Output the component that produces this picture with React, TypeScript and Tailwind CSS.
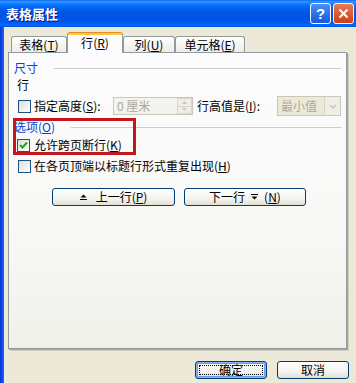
const FONT = "font-['Noto_Sans_CJK_SC','Noto_Sans',sans-serif]";

const Mn = ({ k }: { k: string }) => (
  <span>
    (<u className="underline-offset-1">{k}</u>)
  </span>
);

const CheckBox = ({ checked = false }: { checked?: boolean }) => (
  <span className="w-[13px] h-[13px] shrink-0 border border-[#1c5180] bg-[linear-gradient(135deg,#dcdcd7,#ffffff)] flex items-center justify-center">
    {checked && (
      <svg width="9" height="8" viewBox="0 0 9 8">
        <path d="M1 4 L3.5 6.5 L8 1.5" stroke="#21a121" strokeWidth="2" fill="none" />
      </svg>
    )}
  </span>
);

const GroupLabel = ({ text, k }: { text: string; k?: string }) => (
  <div className="flex items-center h-[14px] pl-[5px] pr-[5px]">
    <span className="text-[#0046d5] leading-[14px]">
      {text}
      {k && <Mn k={k} />}
    </span>
    <div className="flex-1 ml-[16px] h-px bg-[#d0d0bf]" />
  </div>
);

const Tab = ({ label, k, w, selected = false }: { label: string; k: string; w: string; selected?: boolean }) =>
  selected ? (
    <div className={`${w} h-[21px] relative z-10 flex flex-col border-x border-t border-[#919b9c] border-t-[#e68b2c] rounded-t-[3px] bg-[#fcfcfe]`}>
      <div className="h-[2px] bg-[#ffc73c]" />
      <div className="flex-1 flex items-center justify-center leading-[14px] pb-[2px]">
        {label}
        <Mn k={k} />
      </div>
    </div>
  ) : (
    <div className={`${w} h-[17px] flex items-center justify-center border-x border-t border-[#919b9c] rounded-t-[3px] bg-[linear-gradient(180deg,#ffffff,#ecebe6)] leading-[14px] pb-[1px]`}>
      {label}
      <Mn k={k} />
    </div>
  );

const XpButton = ({ children, w, focused = false }: { children: React.ReactNode; w: string; focused?: boolean }) => (
  <div
    className={`${w} h-[18px] rounded-[3px] border border-[#003c74] bg-[linear-gradient(180deg,#ffffff_0%,#f4f3ee_60%,#e3e1d6_100%)] flex items-center justify-center ${
      focused ? 'shadow-[inset_0_0_0_1px_#8cb4f2,inset_0_0_0_2px_#6b9ae8]' : ''
    }`}
  >
    {focused ? (
      <div className="w-[calc(100%-6px)] h-[calc(100%-6px)] border border-dotted border-black flex items-center justify-center leading-[12px]">
        {children}
      </div>
    ) : (
      <div className="flex items-center justify-center leading-[14px]">{children}</div>
    )}
  </div>
);

export default function App() {
  return (
    <div className={`w-[356px] h-[383px] bg-[#ece9d8] flex flex-col overflow-hidden text-[12px] text-black ${FONT}`}>
      {/* title bar */}
      <div className="h-[27px] shrink-0 flex items-center pl-[6px] pr-[2px] bg-[linear-gradient(180deg,#0058ee_0%,#3593ff_4%,#288eff_8%,#127dff_14%,#036ffc_20%,#0262ee_30%,#0057e5_45%,#0054e3_60%,#0055eb_75%,#005bf5_85%,#026afe_92%,#0062ef_96%,#0052d6_100%)]">
        <span className="flex-1 text-white font-bold text-[13px] leading-[16px] [text-shadow:1px_1px_#0a1883]">表格属性</span>
        <div className="flex gap-[2px]">
          <div className="w-[21px] h-[21px] rounded-[3px] border border-white bg-[linear-gradient(180deg,#4a8ff5,#1659db)] flex items-center justify-center text-white font-bold text-[15px] leading-none font-['Liberation_Sans',sans-serif]">
            ?
          </div>
          <div className="w-[21px] h-[21px] rounded-[3px] border border-white bg-[linear-gradient(180deg,#e77a5a,#cc3d17)] flex items-center justify-center">
            <svg width="11" height="11" viewBox="0 0 11 11">
              <path d="M1.5 1.5 L9.5 9.5 M9.5 1.5 L1.5 9.5" stroke="white" strokeWidth="2" />
            </svg>
          </div>
        </div>
      </div>

      <div className="flex-1 flex">
        <div className="w-[4px] shrink-0 bg-[linear-gradient(90deg,#0831d9,#0a4be3,#2a64ec)]" />
        <div className="flex-1 flex flex-col">
          {/* tabs */}
          <div className="mt-[6px] h-[20px] flex items-end pl-[7px]">
            <Tab label="表格" k="T" w="w-[56px]" />
            <Tab label="行" k="R" w="w-[56px]" selected />
            <Tab label="列" k="U" w="w-[52px]" />
            <Tab label="单元格" k="E" w="w-[70px]" />
          </div>

          {/* panel */}
          <div className="relative -mt-px ml-[4px] w-[339px] h-[297px] border border-[#919b9c] bg-[linear-gradient(180deg,#fcfcfe_0%,#f8f8f6_60%,#f1f0ea_100%)] shadow-[1px_1px_0_#aca899,2px_2px_0_#d0cdbf] flex flex-col">
            <div className="pt-[8px]">
              <GroupLabel text="尺寸" />
            </div>
            <div className="mt-[3px] h-[14px] pl-[8px] flex items-center leading-[14px]">行</div>

            <div className="mt-[4px] h-[20px] pl-[9px] flex items-center">
              <CheckBox />
              <span className="w-[82px] pl-[3px] leading-[14px]">
                指定高度<Mn k="S" />:
              </span>
              <div className="w-[80px] h-[18px] border border-[#c9c7ba] bg-[#f4f3ee] flex items-center">
                <span className="flex-1 pl-[3px] text-[#aca899] leading-[14px]">0 厘米</span>
                <div className="w-[15px] h-[16px] flex flex-col">
                  <div className="flex-1 bg-[#f0efe6] border border-[#d8d6c8] flex items-center justify-center">
                    <svg width="5" height="3" viewBox="0 0 5 3"><path d="M0 3 L2.5 0 L5 3Z" fill="#c9c7ba" /></svg>
                  </div>
                  <div className="flex-1 bg-[#f0efe6] border border-[#d8d6c8] border-t-0 flex items-center justify-center">
                    <svg width="5" height="3" viewBox="0 0 5 3"><path d="M0 0 L2.5 3 L5 0Z" fill="#c9c7ba" /></svg>
                  </div>
                </div>
              </div>
              <span className="w-[84px] pl-[4px] leading-[14px]">
                行高值是<Mn k="I" />:
              </span>
              <div className="w-[64px] h-[20px] border border-[#c9c7ba] bg-[#ece9d8] flex items-center">
                <span className="flex-1 pl-[3px] text-[#aca899] leading-[14px]">最小值</span>
                <div className="w-[16px] h-[18px] bg-[#f1efe5] border-l border-[#d8d6c8] flex items-center justify-center">
                  <svg width="8" height="5" viewBox="0 0 8 5">
                    <path d="M1 1 L4 4 L7 1" stroke="#c9c7ba" strokeWidth="1.6" fill="none" />
                  </svg>
                </div>
              </div>
            </div>

            <div className="mt-[4px]">
              <GroupLabel text="选项" k="O" />
            </div>
            <div className="mt-[4px] h-[14px] pl-[8px] flex items-center">
              <CheckBox checked />
              <span className="pl-[4px] leading-[14px]">
                允许跨页断行<Mn k="K" />
              </span>
            </div>
            <div className="mt-[7px] h-[14px] pl-[9px] flex items-center">
              <CheckBox />
              <span className="pl-[3px] leading-[14px]">
                在各页顶端以标题行形式重复出现<Mn k="H" />
              </span>
            </div>

            <div className="mt-[15px] pl-[43px] flex gap-[9px]">
              <XpButton w="w-[123px]">
                <svg width="7" height="6" viewBox="0 0 7 6" className="mr-[9px]">
                  <path d="M0.5 3.5 L3.5 0.5 L6.5 3.5Z" fill="black" />
                  <path d="M0 5.5 H7" stroke="black" />
                </svg>
                上一行<Mn k="P" />
              </XpButton>
              <XpButton w="w-[122px]">
                下一行
                <svg width="7" height="6" viewBox="0 0 7 6" className="mx-[6px]">
                  <path d="M0 0.5 H7" stroke="black" />
                  <path d="M0.5 2.5 L3.5 5.5 L6.5 2.5Z" fill="black" />
                </svg>
                <Mn k="N" />
              </XpButton>
            </div>

            {/* red annotation frame */}
            <div className="absolute left-[4px] top-[65px] w-[123px] h-[37px] border-[3px] border-[#c4161c]" />
          </div>

          {/* bottom buttons */}
          <div className="mt-[12px] flex justify-end gap-[10px] pr-[7px]">
            <XpButton w="w-[72px]" focused>
              确定
            </XpButton>
            <XpButton w="w-[72px]">取消</XpButton>
          </div>
        </div>
      </div>
    </div>
  );
}
